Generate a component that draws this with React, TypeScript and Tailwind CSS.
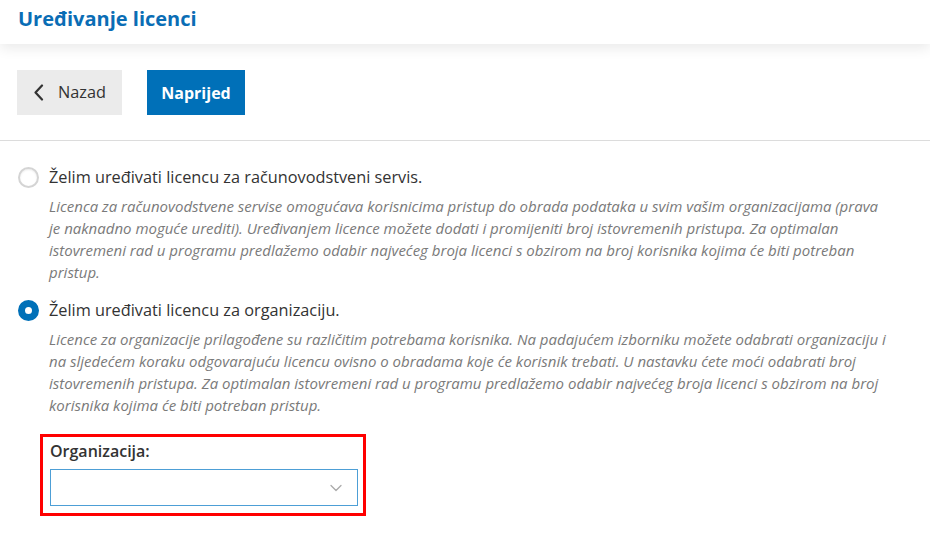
import { ChevronDown } from 'lucide-react'

const font = { fontFamily: '"Open Sans", "Noto Sans", sans-serif' }

interface OptionProps {
  checked: boolean
  label: string
  description: string
}

function RadioOption({ checked, label, description }: OptionProps) {
  return (
    <div className="flex gap-[10px]">
      <div className="pt-[2px]">
        {checked ? (
          <div className="w-[21px] h-[21px] rounded-full border-[7px] border-[#0070b8] bg-white" />
        ) : (
          <div className="w-[21px] h-[21px] rounded-full border-2 border-[#d4d4d4] bg-white shadow-[inset_0_1px_2px_rgba(0,0,0,0.08)]" />
        )}
      </div>
      <div>
        <div className="text-[16.3px] leading-[24px] text-[#333]">{label}</div>
        <p className="mt-[6px] w-[840px] text-[15px] leading-[22px] italic text-[#7a7a7a]">{description}</p>
      </div>
    </div>
  )
}

export default function App() {
  return (
    <div className="w-[930px] h-[544px] bg-white overflow-hidden" style={font}>
      {/* Header */}
      <div className="relative z-10 h-[44px] bg-white shadow-[0_4px_14px_rgba(0,0,0,0.09)] px-[18px] flex items-center">
        <h1 className="text-[20px] font-bold text-[#0a6db5] leading-none -mt-[6px]">Uređivanje licenci</h1>
      </div>

      {/* Actions */}
      <div className="flex gap-[25px] px-[17px] pt-[26px] pb-[25px] border-b border-[#dcdcdc]">
        <button className="h-[45px] w-[105px] bg-[#ebebeb] text-[#333] text-[16.3px] flex items-center pl-[16px] gap-[14px]">
          <svg width="11" height="17" viewBox="0 0 11 17" fill="none">
            <polyline points="9,1.5 2.5,8.5 9,15.5" stroke="#333" strokeWidth="2.2" strokeLinecap="round" strokeLinejoin="round" />
          </svg>
          <span>Nazad</span>
        </button>
        <button className="h-[45px] w-[98px] bg-[#0070b8] text-white text-[16px] font-bold">Naprijed</button>
      </div>

      {/* Options */}
      <div className="px-[18px] pt-[24px] flex flex-col gap-[15px]">
        <RadioOption
          checked={false}
          label="Želim uređivati licencu za računovodstveni servis."
          description="Licenca za računovodstvene servise omogućava korisnicima pristup do obrada podataka u svim vašim organizacijama (prava je naknadno moguće urediti). Uređivanjem licence možete dodati i promijeniti broj istovremenih pristupa. Za optimalan istovremeni rad u programu predlažemo odabir najvećeg broja licenci s obzirom na broj korisnika kojima će biti potreban pristup."
        />
        <RadioOption
          checked={true}
          label="Želim uređivati licencu za organizaciju."
          description="Licence za organizacije prilagođene su različitim potrebama korisnika. Na padajućem izborniku možete odabrati organizaciju i na sljedećem koraku odgovarajuću licencu ovisno o obradama koje će korisnik trebati. U nastavku ćete moći odabrati broj istovremenih pristupa. Za optimalan istovremeni rad u programu predlažemo odabir najvećeg broja licenci s obzirom na broj korisnika kojima će biti potreban pristup."
        />
      </div>

      {/* Organization select */}
      <div className="ml-[40px] mt-[18px] w-[326px] border-[3px] border-[#ff0000] pl-[7px] pr-[5px] pt-[2px] pb-[7px]">
        <label className="block text-[16px] font-semibold text-[#333] leading-[24px]">Organizacija:</label>
        <div className="mt-[6px] h-[37px] border border-[#4d9fd6] flex items-center justify-end pr-[11px]">
          <ChevronDown className="w-[20px] h-[20px] text-[#aaaaaa]" strokeWidth={1.5} />
        </div>
      </div>
    </div>
  )
}
